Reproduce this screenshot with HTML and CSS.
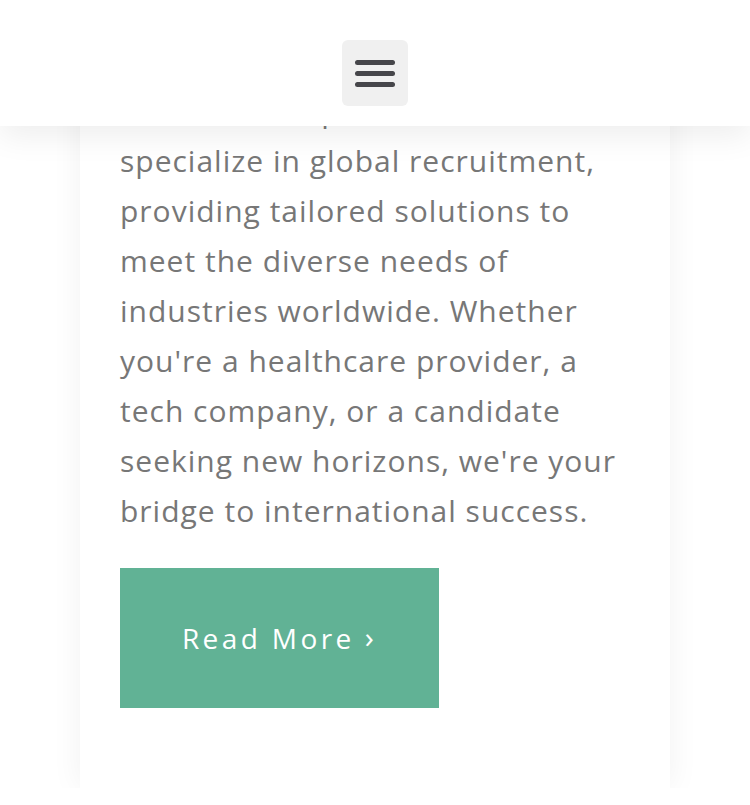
FILE: index.html
```html
<!DOCTYPE html>
<html lang="en">
<head>
    <meta charset="UTF-8">
    <meta name="viewport" content="width=device-width, initial-scale=1.0">
    <title>Global Recruitment</title>
    <link rel="stylesheet" href="styles.css">
</head>
<body>
    <header class="site-header">
        <button class="menu-toggle" aria-label="Menu">
            <span></span>
            <span></span>
            <span></span>
        </button>
    </header>

    <main class="page">
        <section class="about-card">
            <p class="about-text">At Horizon Experts Limited, we specialize in global recruitment, providing tailored solutions to meet the diverse needs of industries worldwide. Whether you're a healthcare provider, a tech company, or a candidate seeking new horizons, we're your bridge to international success.</p>
            <a href="#" class="read-more">Read More <span class="chevron">&rsaquo;</span></a>
        </section>
    </main>
</body>
</html>
```

FILE: styles.css
```css
body {
    margin: 0;
    font-family: 'Open Sans', sans-serif;
    background-color: #fff;
}

.site-header {
    position: fixed;
    top: 0;
    left: 0;
    right: 0;
    height: 126px;
    box-sizing: border-box;
    padding-top: 40px;
    background-color: #fff;
    box-shadow: 0px 10px 30px rgba(0, 0, 0, 0.07);
    display: flex;
    justify-content: center;
    align-items: flex-start;
    z-index: 10;
}

.menu-toggle {
    width: 66px;
    height: 66px;
    background-color: #f0f0f0;
    border: none;
    border-radius: 6px;
    display: flex;
    flex-direction: column;
    justify-content: center;
    align-items: center;
    gap: 6px;
    padding: 0;
    cursor: pointer;
}

.menu-toggle span {
    display: block;
    width: 40px;
    height: 5px;
    border-radius: 3px;
    background-color: #46464a;
}

.page {
    padding: 46px 80px 0;
}

.about-card {
    background-color: #fff;
    box-shadow: 0px 0px 30px rgba(0, 0, 0, 0.06);
    padding: 40px 40px 80px;
}

.about-text {
    margin: 0 0 32px;
    font-size: 30px;
    line-height: 50px;
    letter-spacing: 1px;
    color: #777;
}

.read-more {
    display: inline-flex;
    align-items: center;
    justify-content: center;
    width: 319px;
    height: 140px;
    box-sizing: border-box;
    background-color: #61b295;
    color: #fff;
    text-decoration: none;
    font-size: 28px;
    letter-spacing: 3.4px;
}

.chevron {
    margin-left: 10px;
    font-size: 30px;
    position: relative;
    top: -2px;
}
```
